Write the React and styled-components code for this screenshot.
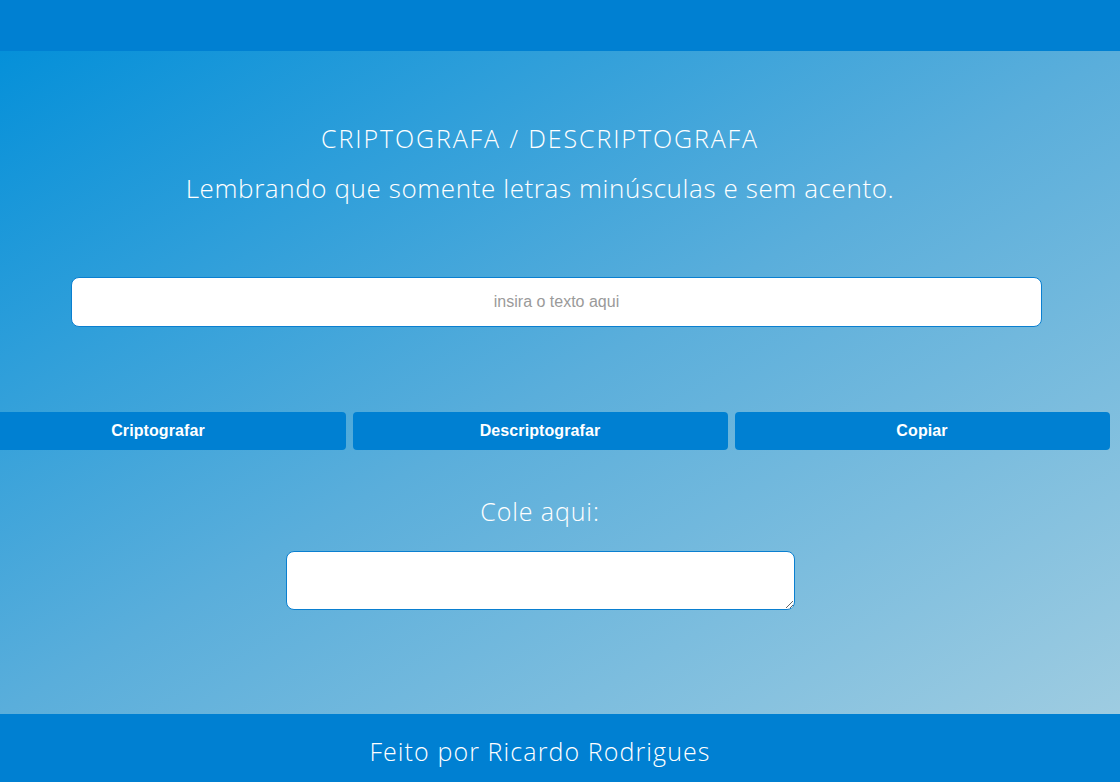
import React from "react";
import styled, { createGlobalStyle } from "styled-components";

const Global = createGlobalStyle`
  html, body { margin: 0; padding: 0; }
  body { font-family: "Open Sans", "Liberation Sans", sans-serif; overflow: hidden; }
  #root { width: 1120px; height: 782px; }
`;

const Page = styled.div`
  width: 1120px;
  height: 782px;
  display: flex;
  flex-direction: column;
  overflow: hidden;
`;

const Header = styled.header`
  height: 51px;
  flex: none;
  background: #0080d2;
`;

const Main = styled.main`
  flex: 1;
  background: linear-gradient(to bottom right, #0590d9 0%, #5aaedb 50%, #9ecce1 100%);
  display: flex;
  flex-direction: column;
  width: 1080px;
  padding-right: 40px;
  align-items: center;
`;

const Title = styled.h1`
  margin: 70px 0 0;
  font-weight: 300;
  font-size: 25px;
  line-height: 34px;
  color: #fff;
  letter-spacing: 1.9px;
`;

const Subtitle = styled.p`
  margin: 16px 0 0;
  font-weight: 300;
  font-size: 26px;
  line-height: 34px;
  color: #fff;
  letter-spacing: 0.6px;
`;

const TextInput = styled.input`
  box-sizing: border-box;
  align-self: flex-start;
  margin: 72px 0 0 71px;
  width: 971px;
  height: 50px;
  border: 1px solid #0a7fd0;
  border-radius: 8px;
  background: #fff;
  text-align: center;
  font-family: "Liberation Sans", Arial, sans-serif;
  font-size: 16px;
  outline: none;
  &::placeholder { color: #9a9a9a; }
`;

const ButtonRow = styled.div`
  margin-top: 85px;
  display: flex;
  gap: 7px;
  justify-content: center;
  width: 1139px;
  flex: none;
`;

const ActionButton = styled.button`
  width: 375px;
  height: 38px;
  flex: none;
  border: none;
  border-radius: 4px;
  background: #0080d2;
  color: #fff;
  font-family: "Liberation Sans", Arial, sans-serif;
  font-weight: 700;
  font-size: 16px;
  letter-spacing: 0.1px;
  cursor: pointer;
`;

const PasteLabel = styled.p`
  margin: 44px 0 0;
  font-weight: 300;
  font-size: 25px;
  line-height: 34px;
  color: #fff;
  letter-spacing: 0.9px;
`;

const PasteArea = styled.textarea`
  box-sizing: border-box;
  margin-top: 23px;
  width: 509px;
  height: 59px;
  border: 1px solid #0a7fd0;
  border-radius: 8px;
  background: #fff;
  outline: none;
  font-family: "Liberation Sans", Arial, sans-serif;
`;

const Footer = styled.footer`
  height: 68px;
  flex: none;
  background: #0080d2;
  display: flex;
  align-items: center;
  justify-content: center;
  padding-right: 40px;
  padding-top: 5px;
  box-sizing: border-box;
`;

const FooterText = styled.span`
  font-weight: 300;
  font-size: 25px;
  color: #fff;
  letter-spacing: 1.1px;
`;

export default function App() {
  return (
    <>
      <Global />
      <Page>
        <Header />
        <Main>
          <Title>CRIPTOGRAFA / DESCRIPTOGRAFA</Title>
          <Subtitle>Lembrando que somente letras minúsculas e sem acento.</Subtitle>
          <TextInput placeholder="insira o texto aqui" />
          <ButtonRow>
            <ActionButton>Criptografar</ActionButton>
            <ActionButton>Descriptografar</ActionButton>
            <ActionButton>Copiar</ActionButton>
          </ButtonRow>
          <PasteLabel>Cole aqui:</PasteLabel>
          <PasteArea />
        </Main>
        <Footer>
          <FooterText>Feito por Ricardo Rodrigues</FooterText>
        </Footer>
      </Page>
    </>
  );
}
